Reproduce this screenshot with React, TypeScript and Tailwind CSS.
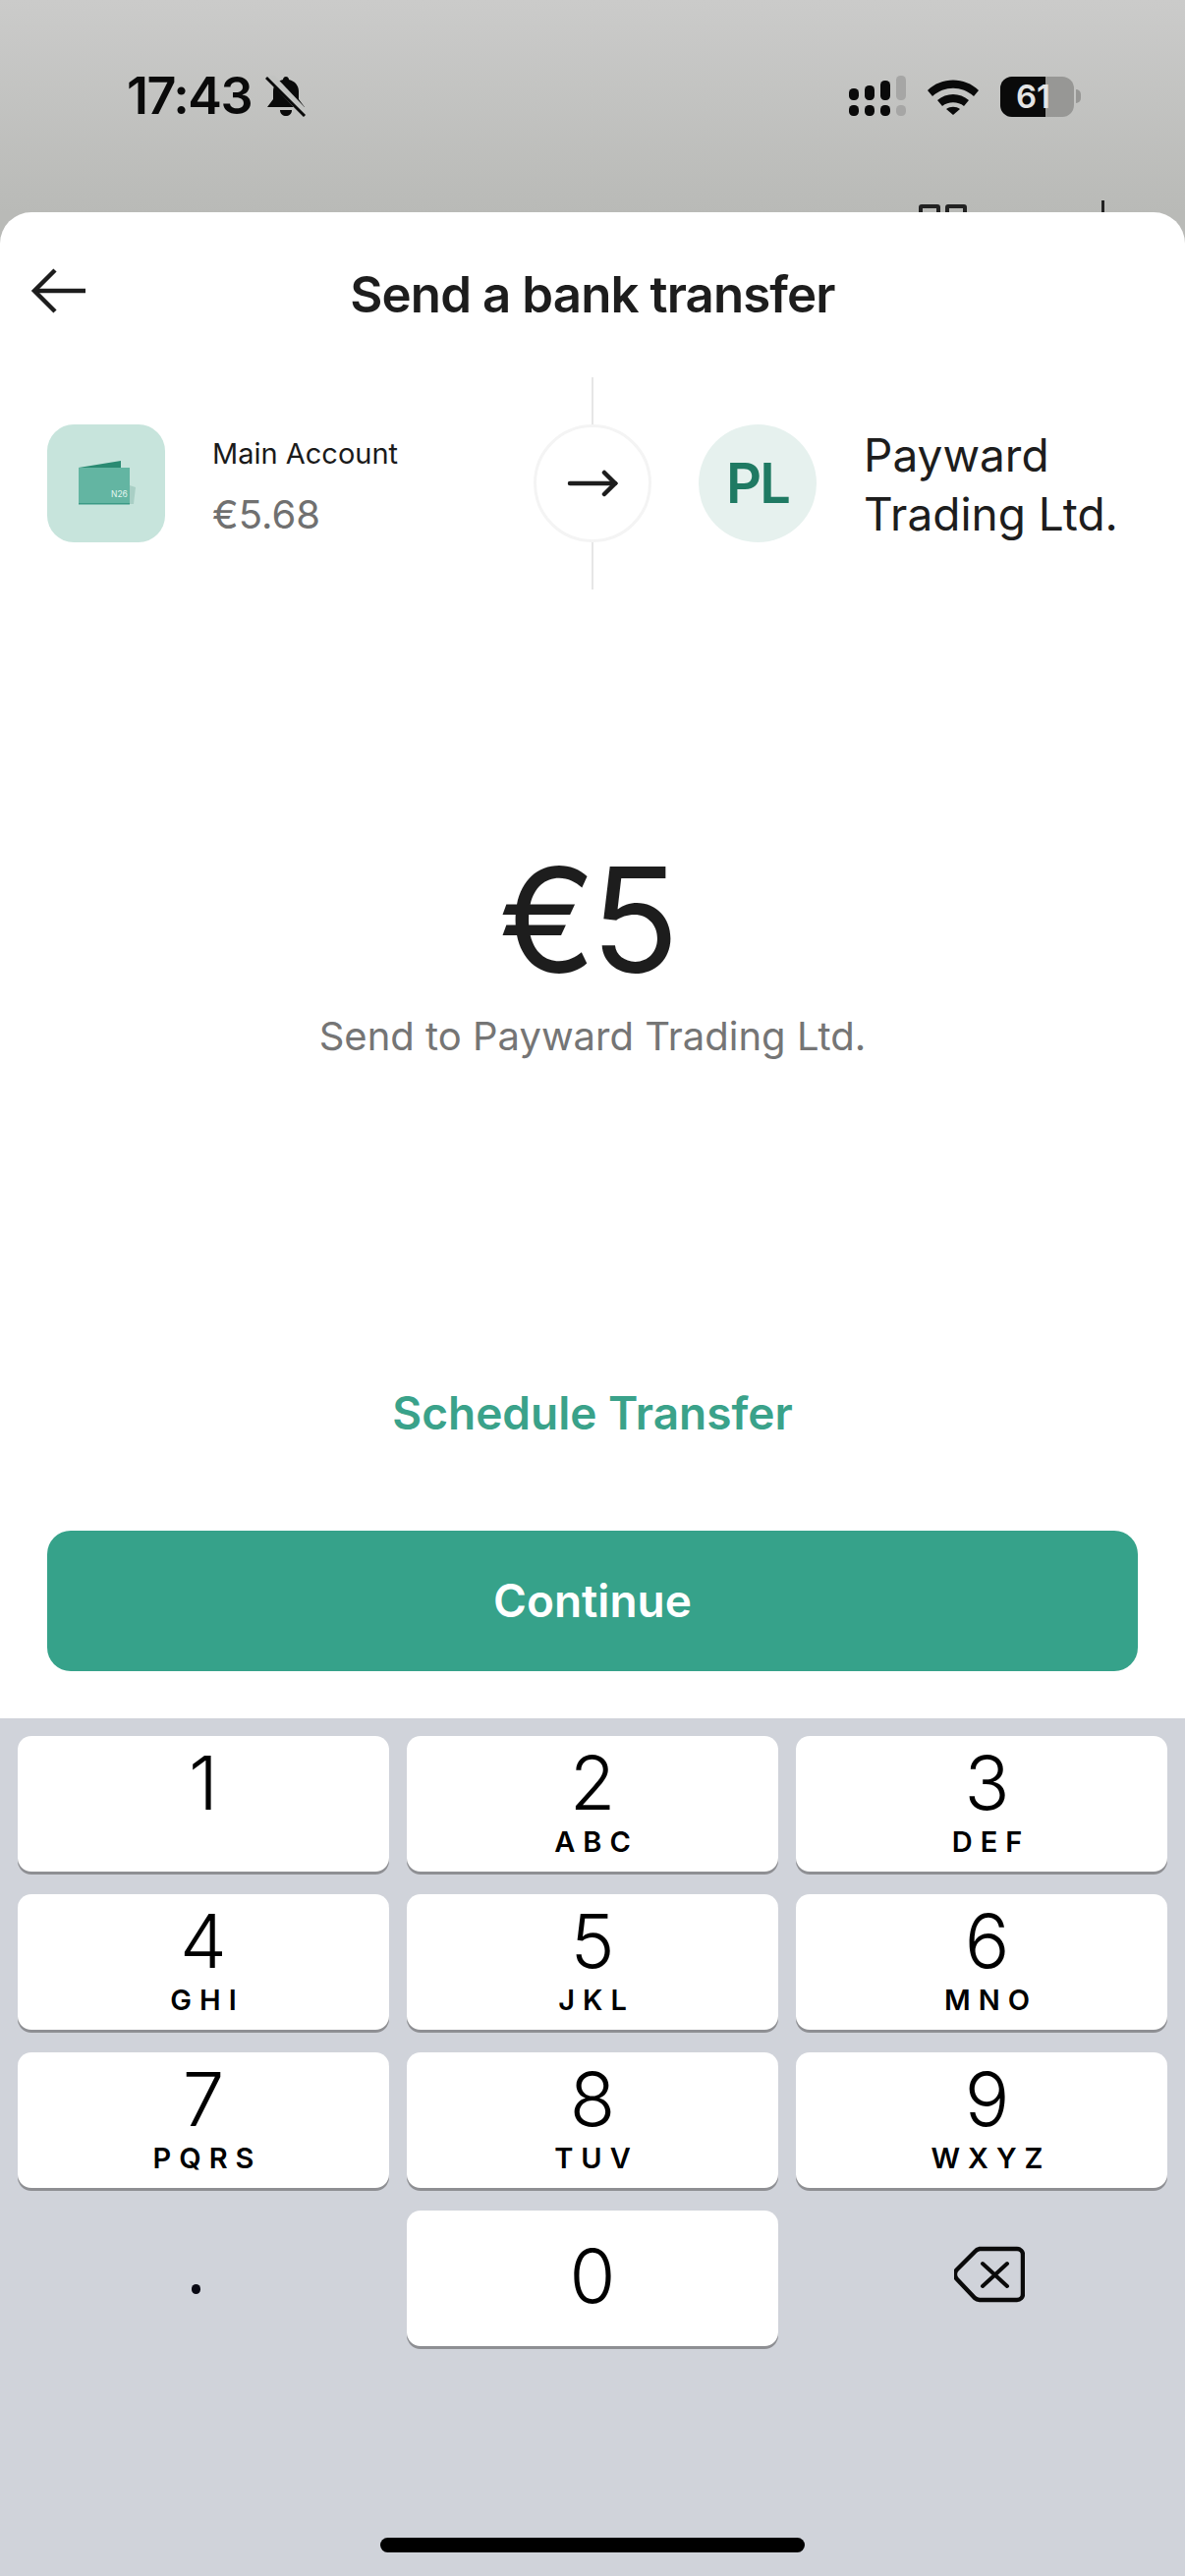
const SANS = "font-['Inter','Liberation_Sans',sans-serif]";

const KEYS: [string, string][] = [
  ["1", ""],
  ["2", "ABC"],
  ["3", "DEF"],
  ["4", "GHI"],
  ["5", "JKL"],
  ["6", "MNO"],
  ["7", "PQRS"],
  ["8", "TUV"],
  ["9", "WXYZ"],
];

function StatusBar() {
  return (
    <div className="relative h-[216px] shrink-0 overflow-hidden bg-gradient-to-b from-[#cbcbca] to-[#b9bab7]">
      <div className="flex items-center justify-between pl-[129px] pr-[106px] pt-[70px]">
        <div className="flex items-center gap-[14px]">
          <span className="text-[52px] leading-[56px] font-semibold tracking-[-1.5px] text-[#0a0a0a]">17:43</span>
          <svg width="42" height="42" viewBox="0 0 42 42">
            <path d="M21 1c2 0 3 1.500 3 3 6 1.500 10 6 10 12v8l6 8H2l6-8v-8C8 10 12 5.500 18 4c0-1.500 1-3 3-3z" fill="#0a0a0a" />
            <path d="M15 35h12c0 4-3 6-6 6s-6-2-6-6z" fill="#0a0a0a" />
            <path d="M4 0l36 38" stroke="#c2c3c1" strokeWidth="8" />
            <path d="M1 2l39 39" stroke="#0a0a0a" strokeWidth="3" />
          </svg>
        </div>
        <div className="flex items-center gap-[22px]">
          <svg width="58" height="42" viewBox="0 0 58 42">
            <rect x="0" y="13" width="10" height="12" rx="4.500" fill="#0a0a0a" />
            <rect x="16" y="10" width="10" height="15" rx="4.500" fill="#0a0a0a" />
            <rect x="32" y="5" width="10" height="20" rx="4.500" fill="#0a0a0a" />
            <rect x="48" y="0" width="10" height="25" rx="4.500" fill="#a6a6a5" />
            <rect x="0" y="30" width="10" height="11" rx="4.500" fill="#0a0a0a" />
            <rect x="16" y="30" width="10" height="11" rx="4.500" fill="#0a0a0a" />
            <rect x="32" y="30" width="10" height="11" rx="4.500" fill="#0a0a0a" />
            <rect x="48" y="30" width="10" height="11" rx="4.500" fill="#a6a6a5" />
          </svg>
          <svg width="52" height="38" viewBox="0 0 52 38">
            <path d="M0 13C14-1 38-1 52 13l-5 6C35 8 17 8 5 19z" fill="#0a0a0a" />
            <path d="M10 23c9-8 23-8 32 0l-5 6c-6-5-16-5-22 0z" fill="#0a0a0a" />
            <path d="M19 32c4-3 10-3 14 0l-7 6z" fill="#0a0a0a" />
          </svg>
          <div className="flex items-center gap-[2px]">
            <div className="relative flex h-[41px] w-[75px] items-center overflow-hidden rounded-[12px] bg-[#979795]">
              <div className="h-full w-[46px] bg-[#0a0a0a]" />
              <span className="absolute left-[16px] top-0 text-[33px] leading-[41px] font-semibold text-[#e4e4e4]">61</span>
            </div>
            <div className="h-[14px] w-[5px] rounded-r-full bg-[#979795]" />
          </div>
        </div>
      </div>
      {/* bits of the screen behind the sheet */}
      <div className="absolute left-[935px] top-[208px] flex gap-[5px]">
        <div className="h-[12px] w-[22px] rounded-t-[3px] border-[4px] border-[#222]" />
        <div className="h-[12px] w-[22px] rounded-t-[3px] border-[4px] border-[#222]" />
      </div>
      <div className="absolute left-[1121px] top-[204px] h-[12px] w-[3px] bg-[#222]" />
    </div>
  );
}

function WalletTile() {
  return (
    <div className="flex h-[120px] w-[120px] shrink-0 items-center justify-center rounded-[27px] bg-[#c7e4dc]">
      <svg width="64" height="56" viewBox="0 0 64 56">
        <path d="M4 12 L47 5 V12z" fill="#2a8a72" />
        <path d="M56 30 L62 32 L60 49 L56 49z" fill="#a9cfc5" />
        <rect x="4" y="12" width="52" height="37" fill="#63b5a2" />
        <rect x="4" y="48" width="52" height="1.500" fill="#3b9a85" />
        <text x="37" y="42" fontSize="8.500" fill="#e2f5f0" fontFamily="Inter, sans-serif">N26</text>
      </svg>
    </div>
  );
}

function Key({ n, l, shift, mid }: { n: string; l: string; shift?: boolean; mid?: boolean }) {
  return (
    <div className={`flex h-[138px] flex-col items-center rounded-[14px] bg-white text-black shadow-[0_3px_0_#8e8f93] ${shift ? "pl-[11px]" : ""}`}>
      <span className={`${mid ? "mt-[36px]" : "mt-[17px]"} text-[76px] leading-[60px] font-[350]`}>{n}</span>
      {l && <span className="mt-[16px] pl-[8px] text-[29px] leading-[30px] font-semibold tracking-[8px]">{l}</span>}
    </div>
  );
}

export default function App() {
  return (
    <div className={`flex h-[2622px] w-[1206px] flex-col overflow-hidden bg-[#b9bab7] ${SANS}`}>
      <StatusBar />

      <div className="flex flex-1 flex-col rounded-t-[32px] bg-white">
        {/* header */}
        <div className="relative flex h-[168px] items-center justify-center">
          <svg className="absolute left-[30px] top-[56px]" width="60" height="48" viewBox="0 0 60 48" fill="none" stroke="#1d1d1d" strokeWidth="4.500">
            <path d="M57 24H6" />
            <path d="M26 3 5 24l21 21" />
          </svg>
          <h1 className="text-[51px] leading-[60px] font-semibold tracking-[-0.9px] text-[#1d1d1d]">Send a bank transfer</h1>
        </div>

        {/* from / to */}
        <div className="flex h-[216px] items-center pl-[48px]">
          <WalletTile />
          <div className="ml-[48px] w-[327px] pt-[8px]">
            <div className="text-[29px] leading-[36px] text-[#1a1a1a]">Main Account</div>
            <div className="mt-[20px] text-[40px] leading-[48px] text-[#707070]">€5.68</div>
          </div>
          <div className="flex h-full w-[120px] shrink-0 flex-col items-center">
            <div className="h-[48px] w-[2px] bg-[#e6e6e6]" />
            <div className="flex h-[120px] w-[120px] items-center justify-center rounded-full border-[3px] border-[#f4f4f4]">
              <svg width="52" height="32" viewBox="0 0 52 32" fill="none" stroke="#1d1d1d" strokeWidth="4.500" strokeLinecap="round">
                <path d="M3 16h46" />
                <path d="M38 5l11 11-11 11" />
              </svg>
            </div>
            <div className="h-[48px] w-[2px] bg-[#e6e6e6]" />
          </div>
          <div className="ml-[48px] flex h-[120px] w-[120px] shrink-0 items-center justify-center rounded-full bg-[#e6f1ee] text-[56px] font-semibold tracking-[-2px] text-[#1f7a63]">
            PL
          </div>
          <div className="ml-[48px] pt-[2px] text-[46px] leading-[60px] text-[#1d1d1d]">
            Payward
            <br />
            Trading Ltd.
          </div>
        </div>

        {/* amount */}
        <div className="mt-[257px] flex flex-col items-center">
          <div className="pr-[12px] text-[148px] leading-[160px] tracking-[-5px] text-[#1d1d1d]">€5</div>
          <div className="mt-[13px] text-[40px] leading-[50px] text-[#757575]">Send to Payward Trading Ltd.</div>
        </div>

        <div className="mt-[330px] text-center text-[46px] leading-[56px] font-semibold text-[#3aa28a]">Schedule Transfer</div>

        <div className="mx-[48px] mt-[92px] flex h-[143px] items-center justify-center rounded-[24px] bg-[#36a28a] text-[46px] font-semibold text-white">
          Continue
        </div>
      </div>

      {/* keypad */}
      <div className="h-[873px] shrink-0 bg-[#d0d3da] px-[18px] pt-[18px]">
        <div className="grid grid-cols-3 gap-x-[18px] gap-y-[23px]">
          {KEYS.map(([n, l], i) => (
            <Key key={n} n={n} l={l} shift={i % 3 === 2} />
          ))}
          <div className="flex h-[138px] items-start justify-center pr-[16px] pt-[75px]">
            <span className="h-[10px] w-[9px] rounded-full bg-[#0a0a14]" />
          </div>
          <Key n="0" l="" mid />
          <div className="flex h-[138px] items-start justify-center pl-[16px] pt-[36px]">
            <svg width="72" height="60" viewBox="0 0 72 60" fill="none" stroke="#0a0a0a" strokeWidth="4.500" strokeLinejoin="round" strokeLinecap="round">
              <path d="M26 3h38a6 6 0 0 1 6 6v40a6 6 0 0 1-6 6H26a8 8 0 0 1-5-2L3 34a7 7 0 0 1 0-10L21 6a8 8 0 0 1 5-3z" />
              <path d="M29 18l25 23M54 18 29 41" strokeWidth="4" />
            </svg>
          </div>
        </div>
        <div className="mx-auto mt-[195px] h-[15px] w-[432px] rounded-full bg-black" />
      </div>
    </div>
  );
}
